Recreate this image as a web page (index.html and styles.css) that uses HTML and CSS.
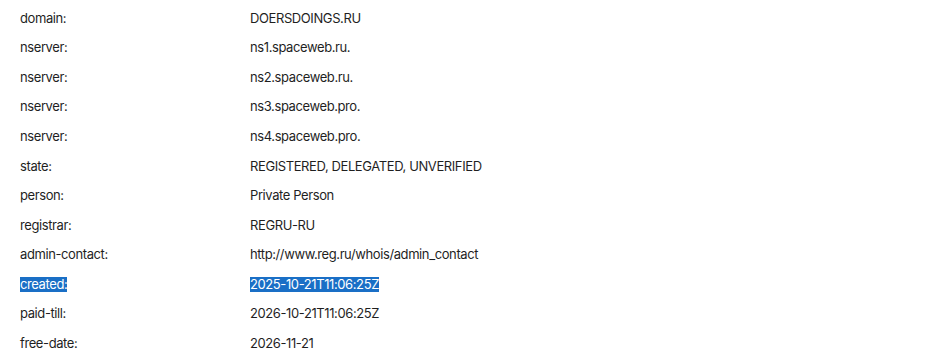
FILE: index.html
```html
<!DOCTYPE html>
<html lang="en">
<head>
<meta charset="utf-8">
<link rel="stylesheet" href="styles.css">
</head>
<body>
<div class="whois">
  <div class="key">domain:</div><div class="val">DOERSDOINGS.RU</div>
  <div class="key">nserver:</div><div class="val">ns1.spaceweb.ru.</div>
  <div class="key">nserver:</div><div class="val">ns2.spaceweb.ru.</div>
  <div class="key">nserver:</div><div class="val">ns3.spaceweb.pro.</div>
  <div class="key">nserver:</div><div class="val">ns4.spaceweb.pro.</div>
  <div class="key">state:</div><div class="val">REGISTERED, DELEGATED, UNVERIFIED</div>
  <div class="key">person:</div><div class="val">Private Person</div>
  <div class="key">registrar:</div><div class="val">REGRU-RU</div>
  <div class="key">admin-contact:</div><div class="val">http://www.reg.ru/whois/admin_contact</div>
  <div class="key"><span class="sel">created:</span></div><div class="val"><span class="sel">2025-10-21T11:06:25Z</span></div>
  <div class="key">paid-till:</div><div class="val">2026-10-21T11:06:25Z</div>
  <div class="key">free-date:</div><div class="val">2026-11-21</div>
</div>
</body>
</html>
```

FILE: styles.css
```css
html, body {
  margin: 0;
  background: #ffffff;
}
body {
  font-family: Inter, "Noto Sans", sans-serif;
  font-size: 13px;
  letter-spacing: -0.4px;
  color: #1f1f1f;
}
.whois {
  display: grid;
  grid-template-columns: 230px 1fr;
  grid-auto-rows: 29.55px;
  padding: 3.5px 0 0 20px;
}
.key, .val {
  display: flex;
  align-items: center;
  line-height: 15px;
  white-space: nowrap;
}
.sel {
  background: #1a6fc6;
  color: #ffffff;
}
```
